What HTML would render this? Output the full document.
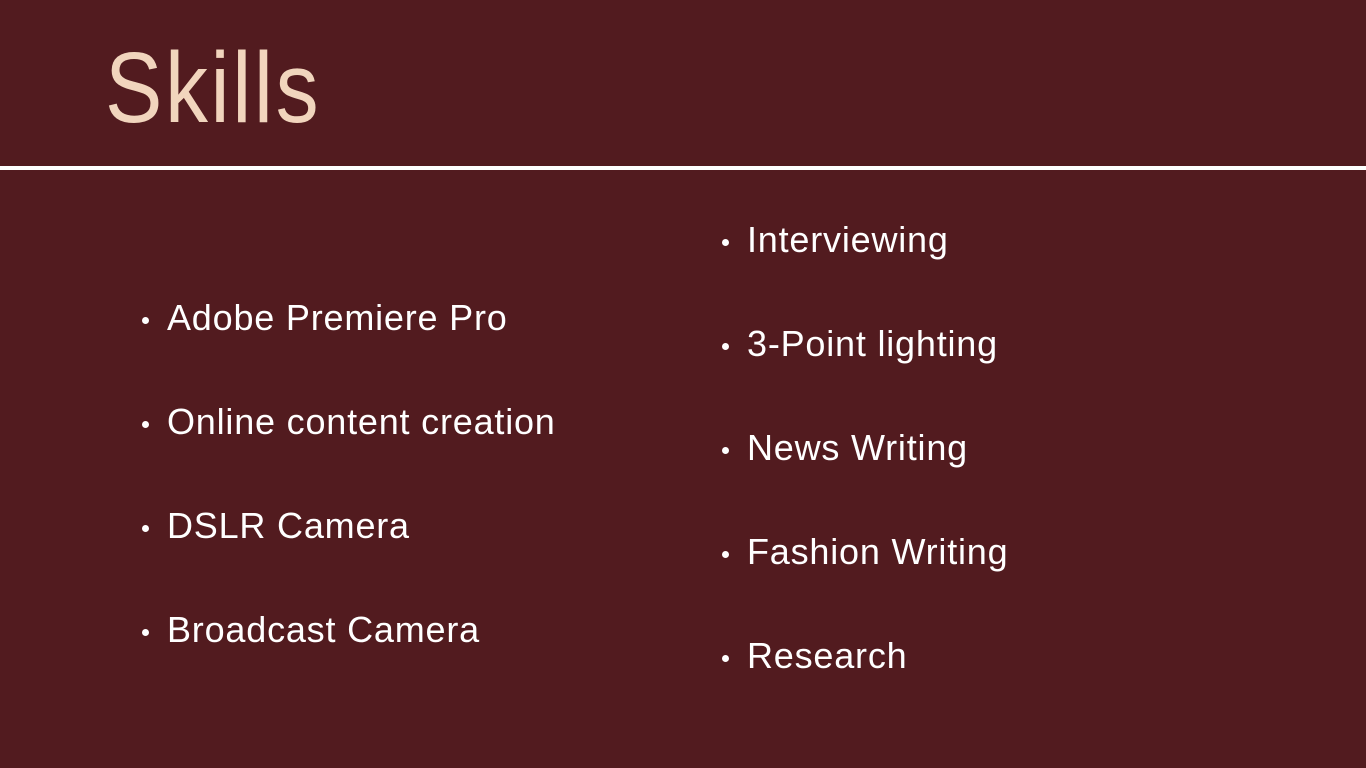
<!DOCTYPE html>
<html><head><meta charset="utf-8"><style>
html,body{margin:0;padding:0}
body{width:1366px;height:768px;background:#521b1f;position:relative;overflow:hidden;font-family:"Liberation Sans",sans-serif;color:#fff}
.title{position:absolute;left:105px;top:28px;font-size:100px;color:#f1d5bd;font-weight:normal;transform:scaleX(0.86);transform-origin:left top;letter-spacing:3px;line-height:1.2}
.line{position:absolute;left:0;top:166px;width:1366px;height:4px;background:#fff}
.item{position:absolute;font-size:36px;letter-spacing:0.8px;line-height:40px;white-space:nowrap}
.item::before{content:"";position:absolute;left:-25px;top:19px;width:7px;height:7px;border-radius:50%;background:#fff}
</style></head><body>
<div class="title">Skills</div>
<div class="line"></div>
<div class="item" style="left:167px;top:298px">Adobe Premiere Pro</div>
<div class="item" style="left:167px;top:402px">Online content creation</div>
<div class="item" style="left:167px;top:506px">DSLR Camera</div>
<div class="item" style="left:167px;top:610px">Broadcast Camera</div>
<div class="item" style="left:747px;top:220px">Interviewing</div>
<div class="item" style="left:747px;top:324px">3-Point lighting</div>
<div class="item" style="left:747px;top:428px">News Writing</div>
<div class="item" style="left:747px;top:532px">Fashion Writing</div>
<div class="item" style="left:747px;top:636px">Research</div>
</body></html>
